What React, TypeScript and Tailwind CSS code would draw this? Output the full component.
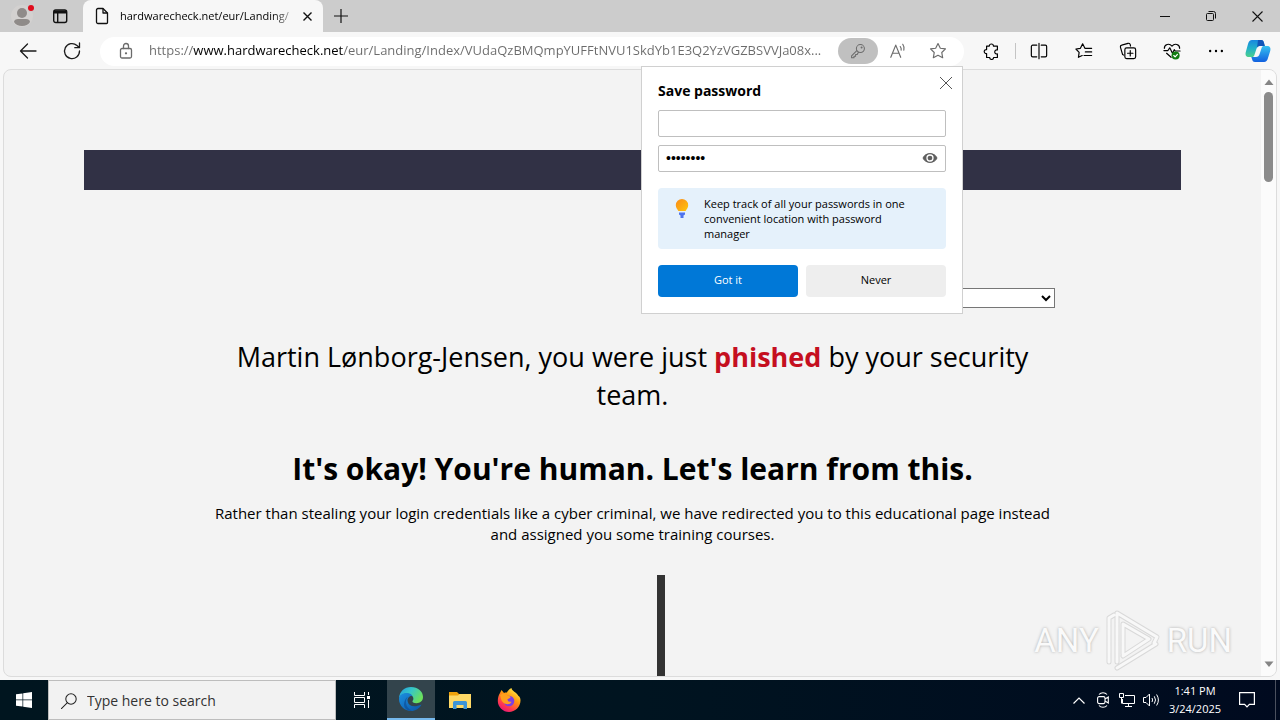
import React from 'react';

const Icon = ({ size = 18, children, className = '' }: { size?: number; children: React.ReactNode; className?: string }) => (
  <svg
    width={size}
    height={size}
    viewBox="0 0 20 20"
    fill="none"
    stroke="currentColor"
    strokeWidth="1.3"
    strokeLinecap="round"
    strokeLinejoin="round"
    className={className}
    aria-hidden="true"
  >
    {children}
  </svg>
);

const TitleBar = () => (
  <header className="flex h-8 shrink-0 bg-[#cccccc]">
    <div className="flex w-[83px] items-center">
      <button aria-label="Profile" className="flex w-11 justify-center">
        <svg width="24" height="24" viewBox="0 0 24 24" aria-hidden="true">
          <circle cx="12" cy="12" r="11" fill="#d3d1d0" />
          <circle cx="12" cy="9" r="5" fill="#8f8b89" />
          <path d="M4 18c0-2 2-3 4-3h8c2 0 4 1 4 3-1.500 2.500-4.500 4-8 4s-6.500-1.500-8-4z" fill="#8f8b89" />
          <circle cx="21" cy="4" r="4" fill="#cccccc" />
          <circle cx="21" cy="4" r="3" fill="#e00b1c" />
        </svg>
      </button>
      <button aria-label="Tab actions menu" className="flex w-8 justify-center">
        <svg width="16" height="16" viewBox="0 0 16 16" fill="none" stroke="#111" strokeWidth="1.4" aria-hidden="true">
          <rect x="1.700" y="2" width="13" height="12.500" rx="2" />
          <path d="M2 4h12.500" strokeWidth="3" />
          <path d="M5.700 4v10.500" />
        </svg>
      </button>
    </div>
    <div className="flex w-60 items-center rounded-t-lg bg-[#f7f7f7] pr-1 pl-3">
      <svg width="14" height="18" viewBox="0 0 14 18" fill="none" stroke="#111" strokeWidth="1.300" strokeLinejoin="round" className="shrink-0" aria-hidden="true">
        <path d="M3 1.500h5L12.500 6v9.500a1 1 0 0 1-1 1H3a1.500 1.500 0 0 1-1.500-1.500V3A1.500 1.500 0 0 1 3 1.500z" />
        <path d="M8 1.500V6h4.500" />
      </svg>
      <span className="ml-[11px] flex-1 overflow-hidden bg-linear-to-r from-black from-85% to-[#dddddd] bg-clip-text text-[11px] whitespace-nowrap text-transparent">
        hardwarecheck.net/eur/Landing/
      </span>
      <button aria-label="Close tab" className="flex w-6 shrink-0 justify-center">
        <svg width="9" height="9" viewBox="0 0 9 9" stroke="#111" strokeWidth="1.400" aria-hidden="true">
          <path d="M.5.5l8 8M8.500.5l-8 8" />
        </svg>
      </button>
    </div>
    <button aria-label="New tab" className="flex w-9 items-center justify-center">
      <svg width="14" height="14" viewBox="0 0 14 14" stroke="#111" strokeWidth="1.200" aria-hidden="true">
        <path d="M7 0v14M0 7h14" />
      </svg>
    </button>
    <div className="ml-auto flex">
      <button aria-label="Minimize" className="flex w-[46px] items-center justify-center">
        <svg width="10" height="10" viewBox="0 0 10 10" stroke="#111" aria-hidden="true">
          <path d="M0 5.500h10" />
        </svg>
      </button>
      <button aria-label="Restore" className="flex w-[46px] items-center justify-center">
        <svg width="10" height="10" viewBox="0 0 10 10" fill="none" stroke="#111" aria-hidden="true">
          <rect x=".5" y="2.500" width="7" height="7" rx="1" />
          <path d="M2.500.5h5a2 2 0 0 1 2 2v5" />
        </svg>
      </button>
      <button aria-label="Close" className="flex w-[46px] items-center justify-center">
        <svg width="11" height="11" viewBox="0 0 11 11" stroke="#111" strokeWidth="1.100" aria-hidden="true">
          <path d="M.5.5l10 10M10.500.5l-10 10" />
        </svg>
      </button>
    </div>
  </header>
);

const SavePassword = () => (
  <section
    role="dialog"
    aria-label="Save password"
    className="absolute top-full right-px z-10 flex h-[248px] w-[322px] flex-col border border-[#d0d0d0] bg-white px-4 pt-3.5 text-black"
  >
    <h2 className="text-sm leading-5 font-bold">Save password</h2>
    <button aria-label="Close" className="absolute top-2 right-2 p-px">
      <svg width="14" height="14" viewBox="0 0 14 14" stroke="#555" aria-hidden="true">
        <path d="M1 1l12 12M13 1L1 13" />
      </svg>
    </button>
    <input
      type="text"
      aria-label="Username"
      className="mt-[9px] h-[27px] w-full rounded-xs border border-[#bfbfbf] px-2 text-xs outline-none"
    />
    <div className="mt-2 flex h-[27px] items-center rounded-xs border border-[#bfbfbf] px-[7px]">
      <input
        type="text"
        aria-label="Password"
        defaultValue="••••••••"
        className="min-w-0 flex-1 font-['Liberation_Sans',sans-serif] text-sm outline-none"
      />
      <button aria-label="Show password">
        <svg width="16" height="12" viewBox="0 0 16 12" fill="none" aria-hidden="true">
          <path d="M1 6c1.300-3 4-4.400 7-4.400S13.700 3 15 6c-1.300 3-4 4.400-7 4.400S2.300 9 1 6z" fill="#5f5f5f" stroke="#5f5f5f" />
          <circle cx="8" cy="6" r="3" fill="#5f5f5f" stroke="#fff" strokeWidth="1.300" />
        </svg>
      </button>
    </div>
    <div className="mt-4 flex h-[61px] rounded-sm bg-[#e5f1fb] pt-2 pl-4">
      <svg width="16" height="24" viewBox="0 0 16 24" className="shrink-0" aria-hidden="true">
        <defs>
          <linearGradient id="bulb" x1="0" y1="0" x2="1" y2="1">
            <stop offset="0" stopColor="#f98a1b" />
            <stop offset="1" stopColor="#ffc60a" />
          </linearGradient>
        </defs>
        <path d="M8 3a6.200 6.200 0 0 0-6.200 6.200c0 2.300 1.300 3.600 2.600 5.800h7.200c1.300-2.200 2.600-3.500 2.600-5.800A6.200 6.200 0 0 0 8 3z" fill="url(#bulb)" />
        <path d="M5 16.500h6v2l-1.500 1v2.500h-3v-2.500L5 18.500z" fill="#4f74ee" />
      </svg>
      <p className="ml-3.5 text-[11px] leading-[15px]">
        Keep track of all your passwords in one
        <br />
        convenient location with password
        <br />
        manager
      </p>
    </div>
    <div className="mt-4 grid grid-cols-2 gap-2 text-[11px]">
      <button className="h-8 rounded-sm bg-[#0078d7] text-white">Got it</button>
      <button className="h-8 rounded-sm bg-[#eeeeee]">Never</button>
    </div>
  </section>
);

const Toolbar = () => (
  <div className="flex h-9 shrink-0 items-center bg-[#f7f7f7] pt-0.5 text-[#1b1b1b]">
    <div className="flex w-[100px] pl-1.5">
      <button aria-label="Back" className="flex w-11 justify-center">
        <Icon size={20}>
          <path d="M18 10H2.500M9.500 3l-7 7 7 7" />
        </Icon>
      </button>
      <button aria-label="Refresh" className="flex w-11 justify-center">
        <Icon size={20}>
          <path d="M17.500 10A7.500 7.500 0 1 1 15 4.500l2.200 2M17.500 2v4.700h-4.700" />
        </Icon>
      </button>
    </div>

    <div className="relative flex h-[29px] min-w-0 flex-1 items-center rounded-full bg-white pr-1.5 pl-4 text-[#6b6b6b]">
      <button aria-label="View site information" className="mr-[13px] shrink-0">
        <Icon size={20}>
          <rect x="4.500" y="7.500" width="11" height="9.500" rx="1.500" />
          <path d="M7.500 7.500V5a2.500 2.500 0 0 1 5 0v2.500" />
          <circle cx="10" cy="12.300" r=".5" fill="currentColor" />
        </Icon>
      </button>
      <input
        aria-label="Address and search bar"
        defaultValue="https://www.hardwarecheck.net/eur/Landing/Index/VUdaQzBMQmpYUFFtNVU1SkdYb1E3Q2YzVGZBSVVJa08x..."
        className="min-w-0 flex-1 bg-[linear-gradient(to_right,#6b6b6b_44px,#000_44px,#000_194px,#6b6b6b_194px)] bg-clip-text text-[13px] text-transparent outline-none"
      />
      <button aria-label="Save password" className="flex h-[26px] w-10 shrink-0 items-center justify-center rounded-full bg-[#c0c0c0]">
        <Icon size={16}>
          <circle cx="13" cy="7" r="5" />
          <path d="M8.500 9.500L2 16v2.500h3v-2h2v-2h2l1.500-3" />
          <circle cx="14.500" cy="5.500" r=".6" />
        </Icon>
      </button>
      <button aria-label="Read aloud" className="flex w-10 shrink-0 justify-center">
        <Icon>
          <path d="M2 17L7.500 3.500 13 17M4 12.500h7M12.500 5a5 5 0 0 1 1 4M15.300 2.500a8 8 0 0 1 1.200 6.500" />
        </Icon>
      </button>
      <button aria-label="Add to favorites" className="flex w-10 shrink-0 justify-center">
        <Icon>
          <path d="M10 1.700l2.600 5.200 5.700.8-4.100 4 1 5.800-5.200-2.700-5.200 2.700 1-5.800-4.100-4 5.700-.8z" />
        </Icon>
      </button>
      <SavePassword />
    </div>

    <div className="flex shrink-0 items-center pr-0.5 pl-[5px] text-black">
      <button aria-label="Extensions" className="flex w-[46px] justify-center">
        <Icon>
          <path d="M4 4.500h3a2.300 2.300 0 1 1 4.600 0h4.400v4.300a2.300 2.300 0 1 0 0 4.400v4h-4.200a2.200 2.200 0 0 1-4.400 0H4v-4.400a2.200 2.200 0 1 1 0-4.300z" />
        </Icon>
      </button>
      <span className="h-4 w-px bg-[#c4c4c4]" />
      <button aria-label="Split screen" className="flex w-[46px] justify-center">
        <Icon>
          <path d="M7.500 3.500H3a1.500 1.500 0 0 0-1.500 1.500v10A1.500 1.500 0 0 0 3 16.500h4.500M12.500 3.500H17A1.500 1.500 0 0 1 18.500 5v10a1.500 1.500 0 0 1-1.500 1.500h-4.500M10 1.500v17" />
        </Icon>
      </button>
      <button aria-label="Favorites" className="flex w-11 justify-center">
        <Icon>
          <path d="M11 7L8.500 2 6 7l-5 .8 3.600 3.700-.8 5.500L8 15M11 7h7.500M11.500 11h7M10 15h8.500" />
        </Icon>
      </button>
      <button aria-label="Collections" className="flex w-11 justify-center">
        <Icon>
          <path d="M5 14.500l-1-.5-2.500-8.500A2 2 0 0 1 3 3.500l7-2a2 2 0 0 1 2.500 1.500l.3 1.500" />
          <rect x="6.500" y="6.500" width="12" height="12" rx="2" />
          <path d="M12.500 9.500v6M9.500 12.500h6" />
        </Icon>
      </button>
      <button aria-label="Browser essentials" className="flex w-11 justify-center">
        <Icon>
          <path d="M1.500 7c0-4.500 5.500-6 8.500-2.500C13 1 18.500 2.500 18.500 7M1 9.500h4.500l2-3 3 6 2-4 1 1.500h5.500M4 12.500l5 4.500" />
          <circle cx="14" cy="15" r="4.500" fill="#107c10" stroke="none" />
          <path d="M12 15l1.500 1.500L16 13.700" stroke="#fff" />
        </Icon>
      </button>
      <button aria-label="Settings and more" className="flex w-11 justify-center">
        <Icon>
          <path d="M3.500 10h.01M10 10h.01M16.500 10h.01" strokeWidth="2.600" />
        </Icon>
      </button>
      <button aria-label="Copilot" className="flex w-10 justify-center">
        <svg width="26" height="24" viewBox="0 0 26 24" aria-hidden="true">
          <defs>
            <linearGradient id="cpA" x1="0" y1="0" x2="0" y2="1">
              <stop offset="0" stopColor="#1887e0" />
              <stop offset=".5" stopColor="#22b1c8" />
              <stop offset="1" stopColor="#4cd08c" />
            </linearGradient>
            <linearGradient id="cpB" x1="0" y1="0" x2="0" y2="1">
              <stop offset="0" stopColor="#35c1f0" />
              <stop offset="1" stopColor="#1160df" />
            </linearGradient>
          </defs>
          <path d="M7 1h9c2 0 2.500 1 3 3l.8 3H15c-2 0-3 1-3.600 3l-2 6c-.5 1.500-1 2-2.500 2H4c-3 0-4-2-3.200-5L3 5c.7-2.500 2-4 4-4z" fill="url(#cpA)" />
          <path d="M13 1h3c2 0 2.500 1 3 3l.8 3H15c-1.500 0-2.400.6-3 1.700z" fill="#1155b8" />
          <path d="M19 23h-9c-2 0-2.500-1-3-3l-.7-2H11c2 0 3-1 3.600-3l2-6c.5-1.500 1-2 2.500-2H22c3 0 4 2 3.200 5L23 19c-.7 2.500-2 4-4 4z" fill="url(#cpB)" />
        </svg>
      </button>
    </div>
  </div>
);

const Watermark = () => (
  <div
    className="absolute right-11 bottom-1 flex items-center gap-1.5 font-['Liberation_Sans_Narrow','Roboto',sans-serif] text-[33px] leading-none text-[#fafafa] [text-shadow:0_0_3px_#aaa]"
    aria-hidden="true"
  >
    <span>ANY</span>
    <svg width="56" height="64" viewBox="0 0 56 64" fill="none" strokeLinejoin="round" strokeLinecap="round">
      <path d="M4 54V10l5-3M12 54V5l40 24-3 6M12 60l39-24M18 46V16l26 15-26 17" stroke="#d9d9d9" strokeWidth="5" />
      <path d="M4 54V10l5-3M12 54V5l40 24-3 6M12 60l39-24M18 46V16l26 15-26 17" stroke="#f8f8f8" strokeWidth="3" />
    </svg>
    <span>RUN</span>
  </div>
);

const Page = () => (
  <div className="flex min-h-0 flex-1 bg-[#f7f7f7] px-[3px] pt-px pb-[3px]">
    <div className="relative flex min-w-0 flex-1 overflow-hidden rounded-lg border border-[#dcdcdc] bg-[#f3f3f3]">
      <main className="min-w-0 flex-1 overflow-hidden px-20 pt-20 text-center text-black">
        <div className="h-10 bg-[#313145]" />
        <div className="mx-auto max-w-[844px] pt-[98px]">
          <div className="flex justify-end">
            <select aria-label="Language" className="h-5 w-44 rounded-none border border-[#767676] bg-white text-xs">
              <option> </option>
            </select>
          </div>
          <h2 className="mt-[30px] px-5 text-[27px] leading-[38px]">
            Martin Lønborg-Jensen, you were just <strong className="text-[#c50f1f]">phished</strong> by your security team.
          </h2>
          <h1 className="mt-[33px] text-[30px] leading-[44px] font-bold">It's okay! You're human. Let's learn from this.</h1>
          <p className="mt-3 text-[15px] leading-[21px]">
            Rather than stealing your login credentials like a cyber criminal, we have redirected you to this educational page instead
            and assigned you some training courses.
          </p>
          <div className="mt-[30px] ml-[446px] h-40 w-2 bg-[#333333]" />
        </div>
      </main>

      <div className="flex w-[15px] shrink-0 flex-col items-center justify-between bg-[#fbfbfb] py-2">
        <div className="flex flex-col items-center gap-1.5">
          <svg width="10" height="8" viewBox="0 0 10 8" aria-hidden="true">
            <path d="M5 1.500L9.500 7h-9z" fill="#858585" />
          </svg>
          <div className="h-[90px] w-[9px] rounded-full bg-[#8b8b8b]" />
        </div>
        <svg width="10" height="8" viewBox="0 0 10 8" aria-hidden="true">
          <path d="M5 7L.5 1.500h9z" fill="#858585" />
        </svg>
      </div>
      <Watermark />
    </div>
  </div>
);

const Taskbar = () => (
  <footer className="flex h-10 shrink-0 bg-linear-to-r from-[#00151f] via-[#001420] to-[#000a1f] text-white">
    <button aria-label="Start" className="flex w-12 items-center justify-center">
      <svg width="16" height="16" viewBox="0 0 16 16" fill="#fff" aria-hidden="true">
        <path d="M0 2.300l6.500-.9v6.200H0zM7.200 1.300L16 0v7.600H7.200zM0 8.300h6.500v6.300L0 13.700zM7.200 8.300H16V16l-8.800-1.300z" />
      </svg>
    </button>
    <label className="flex w-72 items-center border border-[#bdbdbd] bg-[#f2f2f2] pt-px pl-3 text-[#222]">
      <Icon size={16}>
        <circle cx="12.500" cy="7.500" r="6.500" />
        <path d="M8 12l-7.500 7.500" />
      </Icon>
      <input
        aria-label="Search"
        placeholder="Type here to search"
        className="ml-2.5 min-w-0 flex-1 text-sm outline-none placeholder:text-[#333]"
      />
    </label>
    <button aria-label="Task View" className="flex w-[51px] items-center justify-center">
      <svg width="16" height="16" viewBox="0 0 16 16" fill="none" stroke="#fff" aria-hidden="true">
        <path d="M.5 0v3.500h10V0M.5 16v-3.500h10V16M.5 5.500h10v5H.5zM14.500 0v3M14.500 8v8" />
        <path d="M13 4h3v3h-3z" fill="#fff" stroke="none" />
      </svg>
    </button>
    <button aria-label="Microsoft Edge" className="flex w-12 items-center justify-center border-b-2 border-[#76b9ed] bg-[#33444c]">
      <svg width="24" height="24" viewBox="0 0 24 24" aria-hidden="true">
        <defs>
          <linearGradient id="edgeTop" x1="0" y1="0" x2="1" y2="0.500">
            <stop offset="0" stopColor="#229be0" />
            <stop offset=".5" stopColor="#36c7c8" />
            <stop offset="1" stopColor="#6be05c" />
          </linearGradient>
          <linearGradient id="edgeLow" x1="0" y1="0" x2="1" y2="1">
            <stop offset="0" stopColor="#1b8fe0" />
            <stop offset="1" stopColor="#0c55a4" />
          </linearGradient>
        </defs>
        <path d="M0 11C.5 4.500 5.500 0 12 0c7 0 12 4.500 12 10 0 4-3 6.200-6.500 6.200-3 0-4.500-1.200-4-2.200 1.200-1.200 1.200-3.200 0-4.800C10 5 3 6 0 11z" fill="url(#edgeTop)" />
        <path d="M0 12c0-4 4-6 7.500-6 3 0 5 1.200 6 3.200-3-.8-5.500 2-4.800 5.300C9.500 19 15 21 22.500 17.500 20.500 21.500 16.500 24 12 24 5.500 24 0 18.500 0 12z" fill="url(#edgeLow)" />
        <path d="M9 9.800c-3 2.500-3.500 10.500 4 14C6 24 4 19 5.500 14.500 6.200 12.300 7.500 10.500 9 9.800z" fill="#0d4a91" opacity=".6" />
      </svg>
    </button>
    <button aria-label="File Explorer" className="flex w-[50px] items-center justify-center">
      <svg width="22" height="18" viewBox="0 0 22 18" aria-hidden="true">
        <path d="M0 1h8l2 2h12v14H0z" fill="#f0a30c" />
        <path d="M0 4.500h9l1.500-1.500H22v14H0z" fill="#ffd966" />
        <path d="M4 18v-6.500A1.500 1.500 0 0 1 5.500 10h11a1.500 1.500 0 0 1 1.500 1.500V18h-3.500v-4h-7v4z" fill="#3d94d6" />
      </svg>
    </button>
    <button aria-label="Firefox" className="flex w-12 items-center justify-center">
      <svg width="24" height="24" viewBox="0 0 24 24" aria-hidden="true">
        <defs>
          <linearGradient id="fox" x1=".8" y1="0" x2=".2" y2="1">
            <stop offset="0" stopColor="#fff44f" />
            <stop offset=".4" stopColor="#ff980e" />
            <stop offset=".75" stopColor="#ff3750" />
            <stop offset="1" stopColor="#e3127e" />
          </linearGradient>
        </defs>
        <path d="M3 5l1.500-3L7 5c1-.5 2-.6 3-.5 1-2 3-4 4.500-4.500 0 3 5 4 7 8 1 .5 2 2 2 4.500C23.500 19 18 24 12 24S.8 19 .8 13C.8 10 1.500 7 3 5z" fill="url(#fox)" />
        <circle cx="12" cy="13" r="5.300" fill="#7b3fe4" />
        <path d="M3 7c3-2 6-1.500 7.500 1 1.500 0 3 .3 3 1.200 0 1-2.500 1.300-3 2 0 2 1.500 3 4 2.500-1 2.500-5 3.500-8 1S4 9 3 7z" fill="#ffa01e" />
      </svg>
    </button>

    <div className="ml-auto flex items-center">
      <button aria-label="Show hidden icons" className="flex w-6 justify-center">
        <svg width="12" height="7" viewBox="0 0 12 7" fill="none" stroke="#fff" strokeWidth="1.200" aria-hidden="true">
          <path d="M.5 6.500L6 1l5.500 5.500" />
        </svg>
      </button>
      <button aria-label="Meet Now" className="flex w-6 justify-center">
        <svg width="12" height="16" viewBox="0 0 12 16" fill="none" stroke="#fff" strokeWidth="1.100" aria-hidden="true">
          <path d="M2 2.500C4 .2 8 .2 10 2.500M2 13.500c2 2.300 6 2.300 8 0M8 7l3.300-2v6L8 9" />
          <rect x=".6" y="4.600" width="7.400" height="7" rx="1.500" />
        </svg>
      </button>
      <button aria-label="Network" className="flex w-6 justify-center">
        <svg width="16" height="15" viewBox="0 0 16 15" fill="none" stroke="#fff" aria-hidden="true">
          <path d="M6 2.500h9.500v8h-12V6M9.500 10.500v3M6 13.500h7M.5.500h4v4h-4zM2.500 4.500v6" />
        </svg>
      </button>
      <button aria-label="Volume" className="flex w-6 justify-center">
        <svg width="17" height="14" viewBox="0 0 17 14" fill="none" stroke="#fff" aria-hidden="true">
          <path d="M.5 4.500h2.500l3.500-3.500v12L3 9.500H.5zM9 5q1.200 2 0 4M11.300 3.300q2.400 3.700 0 7.400M13.600 1.500q3.600 5.500 0 11" />
        </svg>
      </button>
      <time className="w-16 text-center text-[11px] leading-[18px]">
        1:41 PM
        <br />
        3/24/2025
      </time>
      <button aria-label="Notifications" className="flex w-10 justify-center">
        <svg width="16" height="16" viewBox="0 0 16 16" fill="none" stroke="#fff" strokeWidth="1.200" aria-hidden="true">
          <path d="M.6.600h14.800v11.800h-5L8 14.900l-2.400-2.500h-5z" />
        </svg>
      </button>
      <span className="ml-2 h-10 w-[5px] border-l border-[#4a505e]" />
    </div>
  </footer>
);

export default function App() {
  return (
    <div className="flex h-screen flex-col overflow-hidden bg-[#f7f7f7] font-['Open_Sans','Noto_Sans',sans-serif]">
      <TitleBar />
      <Toolbar />
      <Page />
      <Taskbar />
    </div>
  );
}
